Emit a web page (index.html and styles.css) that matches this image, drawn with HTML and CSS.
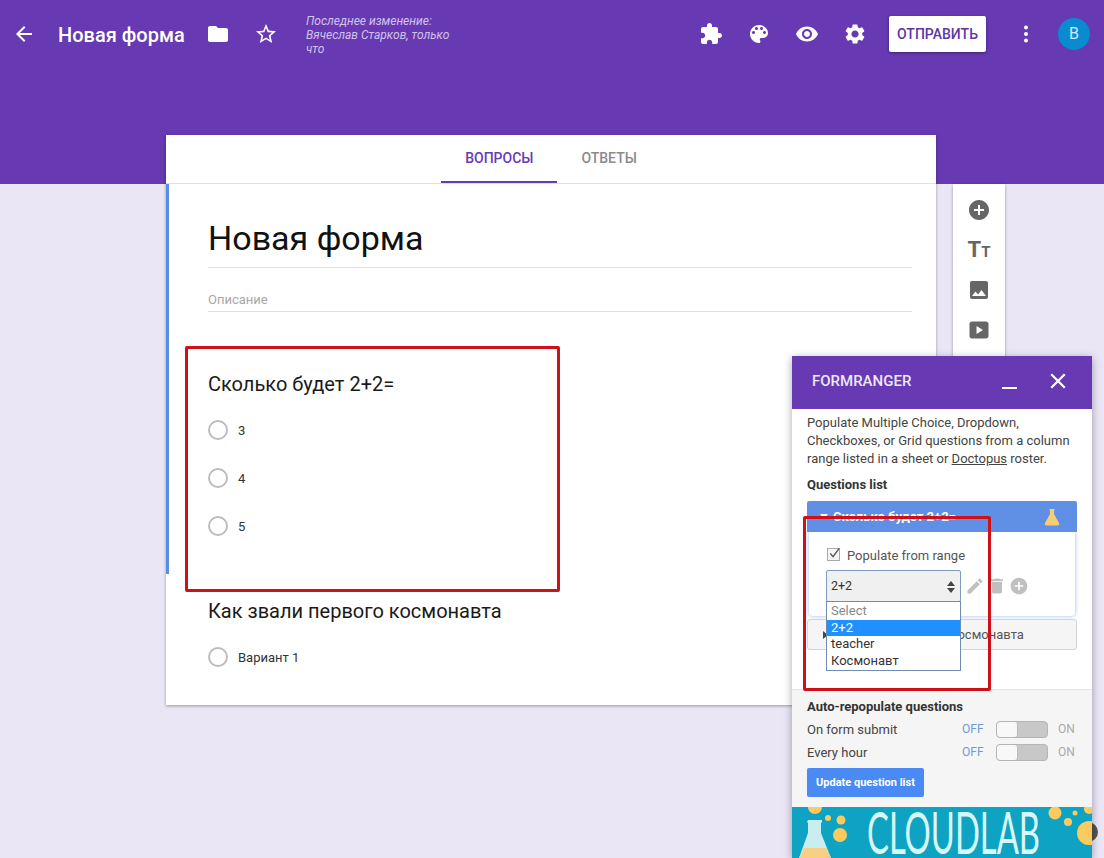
FILE: index.html
```html
<!DOCTYPE html>
<html lang="en">
<head>
    <meta charset="UTF-8">
    <meta name="viewport" content="width=device-width, initial-scale=1.0">
    <title>Новая форма</title>
    <link rel="stylesheet" href="styles.css">
</head>
<body>
    <header class="topbar">
        <div class="icon-btn"><svg viewBox="0 0 24 24"><path d="M20 11H7.83l5.59-5.59L12 4l-8 8 8 8 1.41-1.41L7.83 13H20v-2z"/></svg></div>
        <div class="doc-title">Новая форма</div>
        <div class="icon-btn folder-btn"><svg viewBox="0 0 24 24"><path d="M10 4H4c-1.1 0-1.99.9-1.99 2L2 18c0 1.1.9 2 2 2h16c1.1 0 2-.9 2-2V8c0-1.1-.9-2-2-2h-8l-2-2z"/></svg></div>
        <div class="icon-btn"><svg viewBox="0 0 24 24"><path d="M22 9.24l-7.19-.62L12 2 9.19 8.63 2 9.24l5.46 4.73L5.82 21 12 17.27 18.18 21l-1.63-7.03L22 9.24zM12 15.4l-3.76 2.27 1-4.28-3.32-2.88 4.38-.38L12 6.1l1.71 4.04 4.38.38-3.32 2.88 1 4.28L12 15.4z"/></svg></div>
        <div class="last-edit">Последнее изменение: Вячеслав Старков, только что</div>
        <div class="top-actions">
            <div class="icon-btn"><svg viewBox="0 0 24 24"><path d="M20.5 11H19V7c0-1.1-.9-2-2-2h-4V3.5C13 2.12 11.88 1 10.5 1S8 2.12 8 3.5V5H4c-1.1 0-1.99.9-1.99 2v3.8H3.5c1.49 0 2.7 1.21 2.7 2.7s-1.21 2.7-2.7 2.7H2V20c0 1.1.9 2 2 2h3.8v-1.5c0-1.49 1.21-2.7 2.7-2.7 1.49 0 2.7 1.21 2.7 2.7V22H17c1.1 0 2-.9 2-2v-4h1.5c1.38 0 2.5-1.12 2.5-2.5S21.88 11 20.5 11z"/></svg></div>
            <div class="icon-btn"><svg viewBox="0 0 24 24"><path d="M12 3c-4.97 0-9 4.03-9 9s4.03 9 9 9c.83 0 1.5-.67 1.5-1.5 0-.39-.15-.74-.39-1.01-.23-.26-.38-.61-.38-.99 0-.83.67-1.5 1.5-1.5H16c2.76 0 5-2.24 5-5 0-4.42-4.03-8-9-8zm-5.5 9c-.83 0-1.5-.67-1.5-1.5S5.67 9 6.5 9 8 9.67 8 10.5 7.33 12 6.5 12zm3-4C8.67 8 8 7.33 8 6.5S8.67 5 9.5 5s1.5.67 1.5 1.5S10.33 8 9.5 8zm5 0c-.83 0-1.5-.67-1.5-1.5S13.67 5 14.5 5s1.5.67 1.5 1.5S15.33 8 14.5 8zm3 4c-.83 0-1.5-.67-1.5-1.5S16.67 9 17.5 9s1.5.67 1.5 1.5-.67 1.5-1.5 1.5z"/></svg></div>
            <div class="icon-btn"><svg viewBox="0 0 24 24"><path d="M12 4.5C7 4.5 2.73 7.61 1 12c1.73 4.39 6 7.5 11 7.5s9.27-3.11 11-7.5c-1.73-4.39-6-7.5-11-7.5zM12 17c-2.76 0-5-2.24-5-5s2.24-5 5-5 5 2.24 5 5-2.24 5-5 5zm0-8c-1.66 0-3 1.34-3 3s1.34 3 3 3 3-1.34 3-3-1.34-3-3-3z"/></svg></div>
            <div class="icon-btn"><svg viewBox="0 0 24 24"><path d="M19.14 12.94c.04-.3.06-.61.06-.94 0-.32-.02-.64-.07-.94l2.03-1.58c.18-.14.23-.41.12-.61l-1.92-3.32c-.12-.22-.37-.29-.59-.22l-2.39.96c-.5-.38-1.03-.7-1.62-.94l-.36-2.54c-.04-.24-.24-.41-.48-.41h-3.84c-.24 0-.43.17-.47.41l-.36 2.54c-.59.24-1.13.57-1.62.94l-2.39-.96c-.22-.08-.47 0-.59.22L2.74 8.87c-.12.21-.08.47.12.61l2.03 1.58c-.05.3-.09.63-.09.94s.02.64.07.94l-2.03 1.58c-.18.14-.23.41-.12.61l1.92 3.32c.12.22.37.29.59.22l2.39-.96c.5.38 1.03.7 1.62.94l.36 2.54c.05.24.24.41.48.41h3.84c.24 0 .44-.17.47-.41l.36-2.54c.59-.24 1.13-.56 1.62-.94l2.39.96c.22.08.47 0 .59-.22l1.92-3.32c.12-.22.07-.47-.12-.61l-2.01-1.58zM12 15.6c-1.98 0-3.6-1.62-3.6-3.6s1.62-3.6 3.6-3.6 3.6 1.62 3.6 3.6-1.62 3.6-3.6 3.6z"/></svg></div>
            <button class="send-btn">ОТПРАВИТЬ</button>
            <div class="icon-btn more-btn"><svg viewBox="0 0 24 24"><circle cx="12" cy="5.5" r="2"/><circle cx="12" cy="12" r="2"/><circle cx="12" cy="18.5" r="2"/></svg></div>
            <div class="avatar">В</div>
        </div>
    </header>

    <main class="form-area">
        <div class="form-card">
            <nav class="tabs">
                <div class="tab tab-active">ВОПРОСЫ</div>
                <div class="tab">ОТВЕТЫ</div>
            </nav>
            <section class="selected-block">
                <h1 class="form-title">Новая форма</h1>
                <div class="form-desc">Описание</div>
                <h2 class="question-title first-question">Сколько будет 2+2=</h2>
                <div class="options">
                    <div class="option"><span class="radio"></span>3</div>
                    <div class="option"><span class="radio"></span>4</div>
                    <div class="option"><span class="radio"></span>5</div>
                </div>
            </section>
            <section class="plain-block">
                <h2 class="question-title">Как звали первого космонавта</h2>
                <div class="options">
                    <div class="option"><span class="radio"></span>Вариант 1</div>
                </div>
            </section>
        </div>
        <aside class="tools">
            <svg class="tool-icon" viewBox="0 0 24 24"><path d="M12 2C6.48 2 2 6.48 2 12s4.48 10 10 10 10-4.48 10-10S17.52 2 12 2zm5 11h-4v4h-2v-4H7v-2h4V7h2v4h4v2z"/></svg>
            <div class="tool-text"><span class="big-t">T</span><span class="small-t">T</span></div>
            <svg class="tool-icon" viewBox="0 0 24 24"><path d="M21 19V5c0-1.1-.9-2-2-2H5c-1.100 0-2 .9-2 2v14c0 1.100.9 2 2 2h14c1.100 0 2-.9 2-2zM8.500 13.500l2.500 3.010L14.500 12l4.500 6H5l3.500-4.500z"/></svg>
            <svg class="tool-icon" viewBox="0 0 24 24"><path d="M5 3.500h14c1.400 0 2.500 1.100 2.500 2.500v12c0 1.400-1.100 2.500-2.500 2.500H5c-1.400 0-2.500-1.100-2.500-2.500V6c0-1.400 1.100-2.500 2.500-2.500zM9.500 8v8l6.500-4z" fill-rule="evenodd"/></svg>
        </aside>
    </main>

    <div class="banner-peek"></div>

    <div class="addon">
        <div class="addon-head">
            <span class="addon-name">FORMRANGER</span>
            <span class="addon-min"></span>
            <svg class="addon-close" viewBox="0 0 16 16"><path d="M2 2l12 12M14 2L2 14"/></svg>
        </div>
        <div class="addon-body">
            <p class="intro">Populate Multiple Choice, Dropdown, Checkboxes, or Grid questions from a column range listed in a sheet or <u>Doctopus</u> roster.</p>
            <div class="list-label">Questions list</div>
            <div class="q-head">
                <span class="q-arrow"></span>
                <span class="q-name">Сколько будет 2+2=</span>
                <svg class="q-flask" viewBox="0 0 16 18"><path d="M5.500 1h5v1.500h-.5v3.500l5 9c.7 1.500 0 2.500-1.500 2.500h-11C1 17.500.3 16.500 1 15l5-9V2.500h-.5z"/></svg>
            </div>
            <div class="q-box">
                <label class="range-check">
                    <span class="check-box"><svg viewBox="0 0 14 14"><path d="M2.500 7l3 3.500L12 1.500"/></svg></span>
                    Populate from range
                </label>
                <div class="range-row">
                    <div class="range-select">
                        2+2
                        <span class="spin"><i class="spin-up"></i><i class="spin-down"></i></span>
                        <div class="dropdown">
                            <div class="dd-item dd-muted">Select</div>
                            <div class="dd-item dd-selected">2+2</div>
                            <div class="dd-item">teacher</div>
                            <div class="dd-item">Космонавт</div>
                        </div>
                    </div>
                    <svg class="range-icon" viewBox="0 0 24 24"><path d="M3 17.250V21h3.750L17.810 9.940l-3.750-3.750L3 17.250zM20.710 7.040c.39-.39.39-1.020 0-1.410l-2.340-2.340c-.39-.39-1.020-.39-1.410 0l-1.830 1.830 3.750 3.750 1.830-1.830z"/></svg>
                    <svg class="range-icon" viewBox="0 0 24 24"><path d="M6 19c0 1.100.9 2 2 2h8c1.100 0 2-.9 2-2V7H6v12zM19 4h-3.500l-1-1h-5l-1 1H5v2h14V4z"/></svg>
                    <svg class="range-icon" viewBox="0 0 24 24"><path d="M12 2C6.480 2 2 6.480 2 12s4.480 10 10 10 10-4.480 10-10S17.520 2 12 2zm5 11h-4v4h-2v-4H7v-2h4V7h2v4h4v2z"/></svg>
                </div>
            </div>
            <div class="q-next"><span class="q-next-arrow"></span>Как звали первого космонавта</div>
        </div>
        <div class="addon-foot">
            <div class="foot-label">Auto-repopulate questions</div>
            <div class="switch-row">
                <span class="switch-name">On form submit</span>
                <span class="off">OFF</span><span class="switch"><span class="knob"></span></span><span class="on">ON</span>
            </div>
            <div class="switch-row">
                <span class="switch-name">Every hour</span>
                <span class="off">OFF</span><span class="switch"><span class="knob"></span></span><span class="on">ON</span>
            </div>
            <button class="update-btn">Update question list</button>
        </div>
        <svg class="banner" viewBox="0 0 300 51">
            <rect width="300" height="51" fill="#0ea3c2"/>
            <g fill="#fbcb5f">
                <circle cx="48" cy="28" r="7"/><circle cx="49" cy="13" r="4.500"/><circle cx="36" cy="11" r="3"/><circle cx="23" cy="0" r="7"/>
                <circle cx="263" cy="6" r="6.500"/><circle cx="276" cy="15" r="4"/><circle cx="283" cy="6" r="2.500"/><circle cx="297" cy="26" r="12"/><circle cx="297" cy="2" r="5"/>
            </g>
            <path d="M16 13h14v2l-1 1v10l10 25H7l9-25V16l-1-1z" fill="#c9eef0"/>
            <path d="M12 41h22l5 10H7z" fill="#f8d084"/>
            <text x="75" y="47" class="banner-text" textLength="173" lengthAdjust="spacingAndGlyphs">CLOUDLAB</text>
        </svg>
    </div>

    <div class="red-box red-box-left"></div>
    <div class="red-box red-box-right"></div>
</body>
</html>
```

FILE: styles.css
```css
* {
    box-sizing: border-box;
}
html, body {
    height: 100%;
}
body {
    margin: 0;
    overflow: hidden;
    position: relative;
    background: #ebe6f6;
    font-family: Roboto, "Noto Sans", sans-serif;
    color: #212121;
}

/* top bar */
.topbar {
    height: 184px;
    padding: 10px 14px 0 0;
    display: flex;
    align-items: flex-start;
    background: #6739b3;
    color: #fff;
}
.icon-btn {
    width: 48px;
    height: 48px;
    flex: none;
    display: flex;
    align-items: center;
    justify-content: center;
}
.icon-btn svg {
    width: 24px;
    height: 24px;
    fill: #fff;
}
.doc-title {
    margin-left: 10px;
    width: 136px;
    font-size: 20px;
    font-weight: 500;
    line-height: 50px;
    white-space: nowrap;
}
.last-edit {
    margin: 4px 0 0 16px;
    width: 152px;
    font-size: 12px;
    font-style: italic;
    line-height: 14px;
    color: #d1c4e9;
}
.top-actions {
    margin-left: auto;
    display: flex;
    align-items: flex-start;
}
.send-btn {
    margin: 6px 16px 0 10px;
    width: 97px;
    height: 36px;
    border: none;
    border-radius: 2px;
    background: #fff;
    box-shadow: 0 1px 3px rgba(0, 0, 0, 0.4);
    font-family: inherit;
    font-size: 14px;
    font-weight: 500;
    color: #5e35a5;
}
.avatar {
    margin: 8px 0 0 8px;
    width: 32px;
    height: 32px;
    border-radius: 50%;
    background: #0a8ad0;
    color: #cdeeff;
    font-size: 16px;
    line-height: 32px;
    text-align: center;
}

/* form */
.form-area {
    margin-top: -49px;
    padding-left: 166px;
    display: flex;
    align-items: flex-start;
    gap: 17px;
}
.form-card {
    width: 770px;
    padding-bottom: 24px;
    background: #fff;
    box-shadow: 0 1px 3px rgba(0, 0, 0, 0.35);
}
.tabs {
    height: 49px;
    display: flex;
    justify-content: center;
    border-bottom: 1px solid #e0e0e0;
}
.tab {
    height: 48px;
    padding: 0 24px;
    font-size: 14px;
    font-weight: 500;
    line-height: 47px;
    color: #8a8a8a;
}
.tab-active {
    color: #673ab7;
    border-bottom: 2px solid #673ab7;
}
.selected-block {
    height: 390px;
    padding: 34px 24px 0 39px;
    border-left: 3px solid #5b8de8;
}
.plain-block {
    padding: 25px 24px 0 42px;
}
.form-title {
    margin: 0;
    padding-bottom: 9px;
    border-bottom: 1px solid #e0e0e0;
    font-size: 34px;
    font-weight: 400;
    line-height: 40px;
    color: #111;
}
.form-desc {
    margin-top: 23px;
    padding-bottom: 3px;
    border-bottom: 1px solid #e0e0e0;
    font-size: 13px;
    line-height: 17px;
    color: #a8a8a8;
}
.question-title {
    margin: 0;
    font-size: 20px;
    font-weight: 400;
    line-height: 24px;
    color: #1a1a1a;
}
.first-question {
    margin-top: 60px;
}
.options {
    margin-top: 10px;
}
.option {
    height: 48px;
    display: flex;
    align-items: center;
    font-size: 13px;
    color: #333;
}
.radio {
    margin-right: 10px;
    width: 20px;
    height: 20px;
    border: 2px solid #bdbdbd;
    border-radius: 50%;
}

/* right toolbar */
.tools {
    margin-top: 49px;
    width: 52px;
    height: 210px;
    padding-top: 14px;
    display: flex;
    flex-direction: column;
    align-items: center;
    gap: 16px;
    background: #fff;
    box-shadow: 0 1px 3px rgba(0, 0, 0, 0.35);
}
.tool-icon {
    width: 24px;
    height: 24px;
    fill: #666;
}
.tool-text {
    height: 24px;
    font-weight: 700;
    line-height: 24px;
    color: #666;
    white-space: nowrap;
}
.big-t {
    font-size: 22px;
}
.small-t {
    font-size: 15px;
}

/* add-on panel */
.addon {
    position: absolute;
    left: 792px;
    top: 356px;
    bottom: 0;
    width: 300px;
    display: flex;
    flex-direction: column;
    background: #fff;
    box-shadow: 0 2px 8px rgba(0, 0, 0, 0.35);
}
.banner-peek {
    position: absolute;
    left: 1078px;
    top: 822px;
    width: 20px;
    height: 20px;
    border-radius: 50%;
    background: #555;
}
.addon-head {
    height: 53px;
    flex: none;
    display: flex;
    align-items: center;
    padding-left: 20px;
    background: #6739b3;
    color: #fff;
}
.addon-name {
    margin-top: -3px;
    width: 190px;
    font-size: 15px;
    font-weight: 500;
    color: #ede7f6;
}
.addon-min {
    margin-top: 10px;
    width: 15px;
    height: 2px;
    background: #fff;
}
.addon-close {
    margin: -4px 0 0 32px;
    width: 18px;
    height: 18px;
    fill: none;
    stroke: #fff;
    stroke-width: 2;
}
.addon-body {
    height: 280px;
    flex: none;
    padding: 5px 15px 0;
}
.intro {
    margin: 0;
    font-size: 13px;
    line-height: 18px;
    color: #444;
}
.list-label {
    margin-top: 9px;
    font-size: 13px;
    font-weight: 700;
    line-height: 16px;
    color: #333;
}
.q-head {
    position: relative;
    margin-top: 8px;
    height: 31px;
    padding-left: 13px;
    display: flex;
    align-items: center;
    border-radius: 2px 2px 0 0;
    background: #5f90e6;
    color: #fff;
    font-size: 13px;
    font-weight: 700;
}
.q-arrow {
    margin-right: 5px;
    border-left: 4px solid transparent;
    border-right: 4px solid transparent;
    border-top: 5px solid #fff;
}
.q-flask {
    position: absolute;
    right: 17px;
    top: 7px;
    width: 16px;
    height: 18px;
    fill: #f5cd73;
}
.q-box {
    margin: 0 2px;
    height: 84px;
    padding: 14px 0 0 17px;
    border-radius: 0 0 4px 4px;
    box-shadow: 0 0 4px rgba(70, 120, 220, 0.55);
}
.range-check {
    height: 18px;
    display: flex;
    align-items: center;
    font-size: 13px;
    color: #555;
}
.check-box {
    margin: -2px 7px 0 1px;
    width: 13px;
    height: 13px;
    border: 1px solid #aaa;
    background: #f4f4f4;
    display: block;
}
.check-box svg {
    display: block;
    width: 13px;
    height: 13px;
    margin: -2px 0 0 0;
    fill: none;
    stroke: #555;
    stroke-width: 1.5;
    overflow: visible;
}
.range-row {
    margin-top: 6px;
    display: flex;
    align-items: center;
    gap: 2px;
}
.range-select {
    position: relative;
    margin-right: 2px;
    width: 135px;
    height: 32px;
    padding-left: 4px;
    border: 1px solid #7d9cc0;
    border-radius: 2px;
    background: #f0f0f0;
    font-size: 12.500px;
    line-height: 30px;
    color: #333;
}
.spin {
    position: absolute;
    right: 5px;
    top: 10px;
}
.spin-up, .spin-down {
    display: block;
    border-left: 4px solid transparent;
    border-right: 4px solid transparent;
}
.spin-up {
    border-bottom: 5px solid #444;
    margin-bottom: 2px;
}
.spin-down {
    border-top: 5px solid #444;
}
.dropdown {
    position: absolute;
    left: -1px;
    top: 30px;
    width: 135px;
    height: 70px;
    padding-top: 1px;
    border: 1px solid #6d8db5;
    background: #fff;
    z-index: 2;
}
.dd-item {
    height: 16.500px;
    padding-left: 4px;
    font-size: 13px;
    line-height: 16.500px;
    color: #333;
}
.dd-muted {
    color: #888;
}
.dd-selected {
    background: #1e90ff;
    color: #fff;
}
.range-icon {
    width: 20px;
    height: 20px;
    fill: #c0c0c0;
}
.q-next {
    margin-top: 3px;
    height: 31px;
    padding-left: 15px;
    display: flex;
    align-items: center;
    border: 1px solid #d4d4d4;
    border-radius: 3px;
    background: #f5f5f5;
    font-size: 13px;
    color: #555;
}
.q-next-arrow {
    margin-right: 5px;
    border-top: 4px solid transparent;
    border-bottom: 4px solid transparent;
    border-left: 5px solid #444;
}
.addon-foot {
    height: 118px;
    flex: none;
    padding: 9px 15px 0;
    border-top: 1px solid #e6e6e6;
    background: #f5f5f5;
}
.foot-label {
    font-size: 13px;
    font-weight: 700;
    line-height: 16px;
    color: #333;
}
.switch-row {
    margin-top: 5px;
    height: 18px;
    display: flex;
    align-items: center;
    font-size: 13px;
    color: #444;
}
.foot-label + .switch-row {
    margin-top: 5px;
}
.switch-name {
    width: 155px;
}
.off {
    width: 34px;
    font-size: 12px;
    color: #6d9ad8;
}
.on {
    margin-left: 10px;
    font-size: 12px;
    color: #aaa;
}
.switch {
    width: 52px;
    height: 17px;
    border: 1px solid #b5b5b5;
    border-radius: 4px;
    background: #c8c8c8;
    overflow: hidden;
}
.knob {
    display: block;
    width: 21px;
    height: 15px;
    border-right: 1px solid #bbb;
    border-radius: 3px;
    background: #f8f8f8;
}
.update-btn {
    margin-top: 7px;
    width: 117px;
    height: 29px;
    padding: 0;
    border: none;
    border-radius: 2px;
    background: #4a8af4;
    font-family: inherit;
    font-size: 11px;
    font-weight: 700;
    color: #fff;
}
.banner {
    display: block;
    width: 300px;
    height: 51px;
    flex: none;
}
.banner-text {
    font-family: Lato, sans-serif;
    font-size: 58px;
    font-weight: 400;
    fill: #d8f7f7;
}

/* annotations drawn on the screenshot */
.red-box {
    position: absolute;
    border: 3px solid #cf1018;
    border-radius: 2px;
    z-index: 5;
}
.red-box-left {
    left: 185px;
    top: 346px;
    width: 375px;
    height: 246px;
}
.red-box-right {
    left: 803px;
    top: 516px;
    width: 188px;
    height: 175px;
}
```
